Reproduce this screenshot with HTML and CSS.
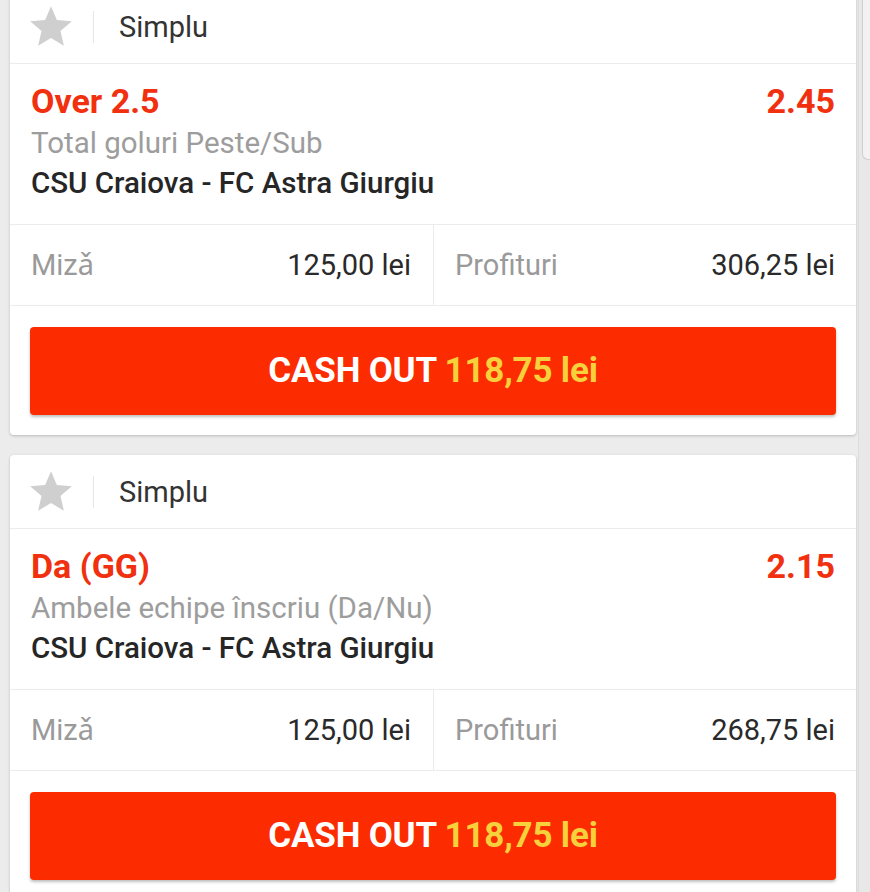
FILE: index.html
```html
<!DOCTYPE html>
<html lang="ro">
<head>
<meta charset="utf-8">
<title>Bilete</title>
<link rel="stylesheet" href="styles.css">
</head>
<body>
<div class="page">
  <div class="list">
    <div class="card">
      <div class="card-head">
        <svg class="star" viewBox="0 0 24 24" width="50" height="50"><path d="M12 17.27L18.18 21l-1.64-7.03L22 9.24l-7.19-.61L12 2 9.19 8.63 2 9.24l5.46 4.73L5.82 21z"/></svg>
        <span class="head-div"></span>
        <span class="head-title">Simplu</span>
      </div>
      <div class="bet">
        <div class="bet-top"><span class="pick">Over 2.5</span><span class="odd">2.45</span></div>
        <div class="market">Total goluri Peste/Sub</div>
        <div class="match">CSU Craiova - FC Astra Giurgiu</div>
      </div>
      <div class="stakes">
        <div class="cell"><span class="lbl">Mizǎ</span><span class="val">125,00 lei</span></div>
        <div class="cell"><span class="lbl">Profituri</span><span class="val">306,25 lei</span></div>
      </div>
      <div class="btn-wrap">
        <button class="cashout">CASH OUT <span class="amt">118,75 lei</span></button>
      </div>
    </div>
    <div class="card">
      <div class="card-head">
        <svg class="star" viewBox="0 0 24 24" width="50" height="50"><path d="M12 17.27L18.18 21l-1.64-7.03L22 9.24l-7.19-.61L12 2 9.19 8.63 2 9.24l5.46 4.73L5.82 21z"/></svg>
        <span class="head-div"></span>
        <span class="head-title">Simplu</span>
      </div>
      <div class="bet">
        <div class="bet-top"><span class="pick">Da (GG)</span><span class="odd">2.15</span></div>
        <div class="market">Ambele echipe înscriu (Da/Nu)</div>
        <div class="match">CSU Craiova - FC Astra Giurgiu</div>
      </div>
      <div class="stakes">
        <div class="cell"><span class="lbl">Mizǎ</span><span class="val">125,00 lei</span></div>
        <div class="cell"><span class="lbl">Profituri</span><span class="val">268,75 lei</span></div>
      </div>
      <div class="btn-wrap">
        <button class="cashout">CASH OUT <span class="amt">118,75 lei</span></button>
      </div>
    </div>
  </div>
  <div class="rail"><div class="rail-thumb"></div></div>
</div>
</body>
</html>
```
FILE: styles.css
```css
* { box-sizing: border-box; }
html, body { margin: 0; padding: 0; }
body {
  background: #ececec;
  font-family: Roboto, "Noto Sans", Arial, sans-serif;
  height: 892px;
  overflow: hidden;
}
.page {
  display: flex;
  height: 892px;
}
.list {
  flex: 1;
  padding: 0 1px 0 10px;
  margin-top: -10px;
  display: flex;
  flex-direction: column;
  gap: 20px;
}
.card {
  background: #fff;
  border-radius: 4px;
  box-shadow: 0 1px 3px rgba(0,0,0,0.22);
  flex-shrink: 0;
}
.card-head {
  height: 74px;
  display: flex;
  align-items: center;
  padding-left: 16px;
  border-bottom: 1px solid #ececec;
}
.star { fill: #cfcfcf; display: block; }
.head-div {
  width: 1px;
  height: 32px;
  background: #e6e6e6;
  margin-left: 17px;
}
.head-title {
  margin-left: 25px;
  font-size: 29px;
  line-height: 74px;
  color: #333;
}
.bet {
  height: 161px;
  padding: 17px 21px 0 21px;
  border-bottom: 1px solid #ececec;
}
.bet-top {
  display: flex;
  justify-content: space-between;
  font-size: 34px;
  line-height: 40px;
  font-weight: 700;
  color: #f0300e;
}
.market {
  margin-top: 2px;
  font-size: 29.5px;
  line-height: 40px;
  color: #9d9d9d;
}
.match {
  font-size: 29.5px;
  line-height: 40px;
  color: #262626;
  font-weight: 500;
}
.stakes {
  display: grid;
  grid-template-columns: 1fr 1fr;
  height: 81px;
  border-bottom: 1px solid #ececec;
}
.cell {
  display: flex;
  justify-content: space-between;
  align-items: center;
  padding: 0 22px 0 21px;
  font-size: 29px;
  line-height: 80px;
}
.cell + .cell {
  border-left: 1px solid #ececec;
  padding: 0 21px 0 21px;
}
.lbl { color: #9a9a9a; }
.val { color: #2a2a2a; }
.btn-wrap {
  padding: 21px 20px 20px 20px;
}
.cashout {
  display: block;
  width: 100%;
  height: 88px;
  border: 0;
  border-radius: 4px;
  background: #fc2c00;
  box-shadow: 0 2px 3px rgba(0,0,0,0.25);
  color: #fff;
  font-family: Roboto, "Noto Sans", Arial, sans-serif;
  font-weight: 700;
  font-size: 35px;
  line-height: 88px;
  padding: 0;
  letter-spacing: -0.2px;
}
.amt { color: #f6d13c; }
.rail {
  width: 12px;
  flex-shrink: 0;
  border-left: 1px solid #dcdcdc;
  margin-left: 1px;
  padding-left: 3px;
  background: #e8e8e8;
}
.rail-thumb {
  height: 160px;
  border-left: 1px solid #cfcfcf;
  border-bottom: 1px solid #cfcfcf;
  border-bottom-left-radius: 6px;
  background: #f2f2f2;
}
```
